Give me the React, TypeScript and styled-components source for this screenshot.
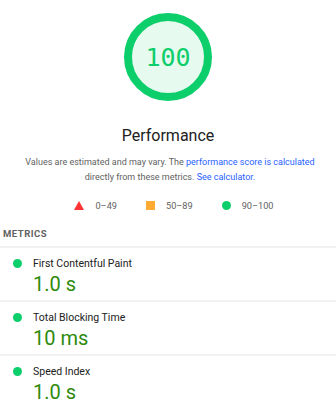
import styled, { createGlobalStyle } from "styled-components";

const Global = createGlobalStyle`
  body {
    margin: 0;
    background: #fff;
    font-family: Roboto, "Liberation Sans", sans-serif;
  }
`;

const Page = styled.div`
  width: 336px;
  display: flex;
  flex-direction: column;
`;

const Header = styled.div`
  display: flex;
  flex-direction: column;
  align-items: center;
  padding-top: 13px;
`;

const Gauge = styled.div`
  width: 88px;
  height: 88px;
  box-sizing: border-box;
  border-radius: 50%;
  border: 8px solid #0cce6b;
  background: #e6faef;
  display: flex;
  align-items: center;
  justify-content: center;
  color: #0cce6b;
  font-family: "DejaVu Sans Mono", monospace;
  font-size: 25px;
`;

const Title = styled.div`
  margin-top: 25px;
  font-size: 16px;
  color: #212121;
`;

const Desc = styled.p`
  margin: 10px 0 0;
  padding-left: 4px;
  font-size: 9px;
  line-height: 15px;
  color: #616161;
  text-align: center;
  white-space: nowrap;

  a {
    color: #2962ff;
    text-decoration: none;
  }
`;

const Legend = styled.div`
  display: flex;
  justify-content: center;
  gap: 29px;
  margin-top: 15px;
  padding-left: 12px;
  font-size: 9.2px;
  color: #616161;
`;

const LegendItem = styled.div`
  display: flex;
  align-items: center;
  gap: 11px;
`;

const Triangle = styled.span`
  width: 0;
  height: 0;
  border-left: 5px solid transparent;
  border-right: 5px solid transparent;
  border-bottom: 9px solid #ff3333;
`;

const Square = styled.span`
  width: 9px;
  height: 9px;
  background: #ffaa33;
`;

const Dot = styled.span`
  width: 9px;
  height: 9px;
  border-radius: 50%;
  background: #0cce6b;
  flex: none;
`;

const SectionTitle = styled.div`
  margin-top: 17px;
  padding: 0 3px 7px;
  font-size: 9.5px;
  font-weight: 700;
  letter-spacing: 0.5px;
  color: #616161;
  border-bottom: 2px solid #f2f2f2;
`;

const Metric = styled.div<{ $last?: boolean }>`
  padding: 9px 0 4px 13px;
  border-bottom: ${(p) => (p.$last ? "none" : "2px solid #f2f2f2")};
`;

const MetricHead = styled.div`
  display: flex;
  align-items: center;
  gap: 11px;
  font-size: 10.5px;
  color: #212121;
`;

const MetricValue = styled.div`
  margin: 2px 0 0 20px;
  font-size: 20px;
  color: #2d8a0c;
`;

const metrics = [
  { name: "First Contentful Paint", value: "1.0 s" },
  { name: "Total Blocking Time", value: "10 ms" },
  { name: "Speed Index", value: "1.0 s" },
];

export default function App() {
  return (
    <Page>
      <Global />
      <Header>
        <Gauge>100</Gauge>
        <Title>Performance</Title>
        <Desc>
          Values are estimated and may vary. The{" "}
          <a href="#">performance score is calculated</a>
          <br />
          directly from these metrics. <a href="#">See calculator.</a>
        </Desc>
      </Header>
      <Legend>
        <LegendItem>
          <Triangle />
          0–49
        </LegendItem>
        <LegendItem>
          <Square />
          50–89
        </LegendItem>
        <LegendItem>
          <Dot />
          90–100
        </LegendItem>
      </Legend>
      <SectionTitle>METRICS</SectionTitle>
      {metrics.map((m, i) => (
        <Metric key={m.name} $last={i === metrics.length - 1}>
          <MetricHead>
            <Dot />
            {m.name}
          </MetricHead>
          <MetricValue>{m.value}</MetricValue>
        </Metric>
      ))}
    </Page>
  );
}
